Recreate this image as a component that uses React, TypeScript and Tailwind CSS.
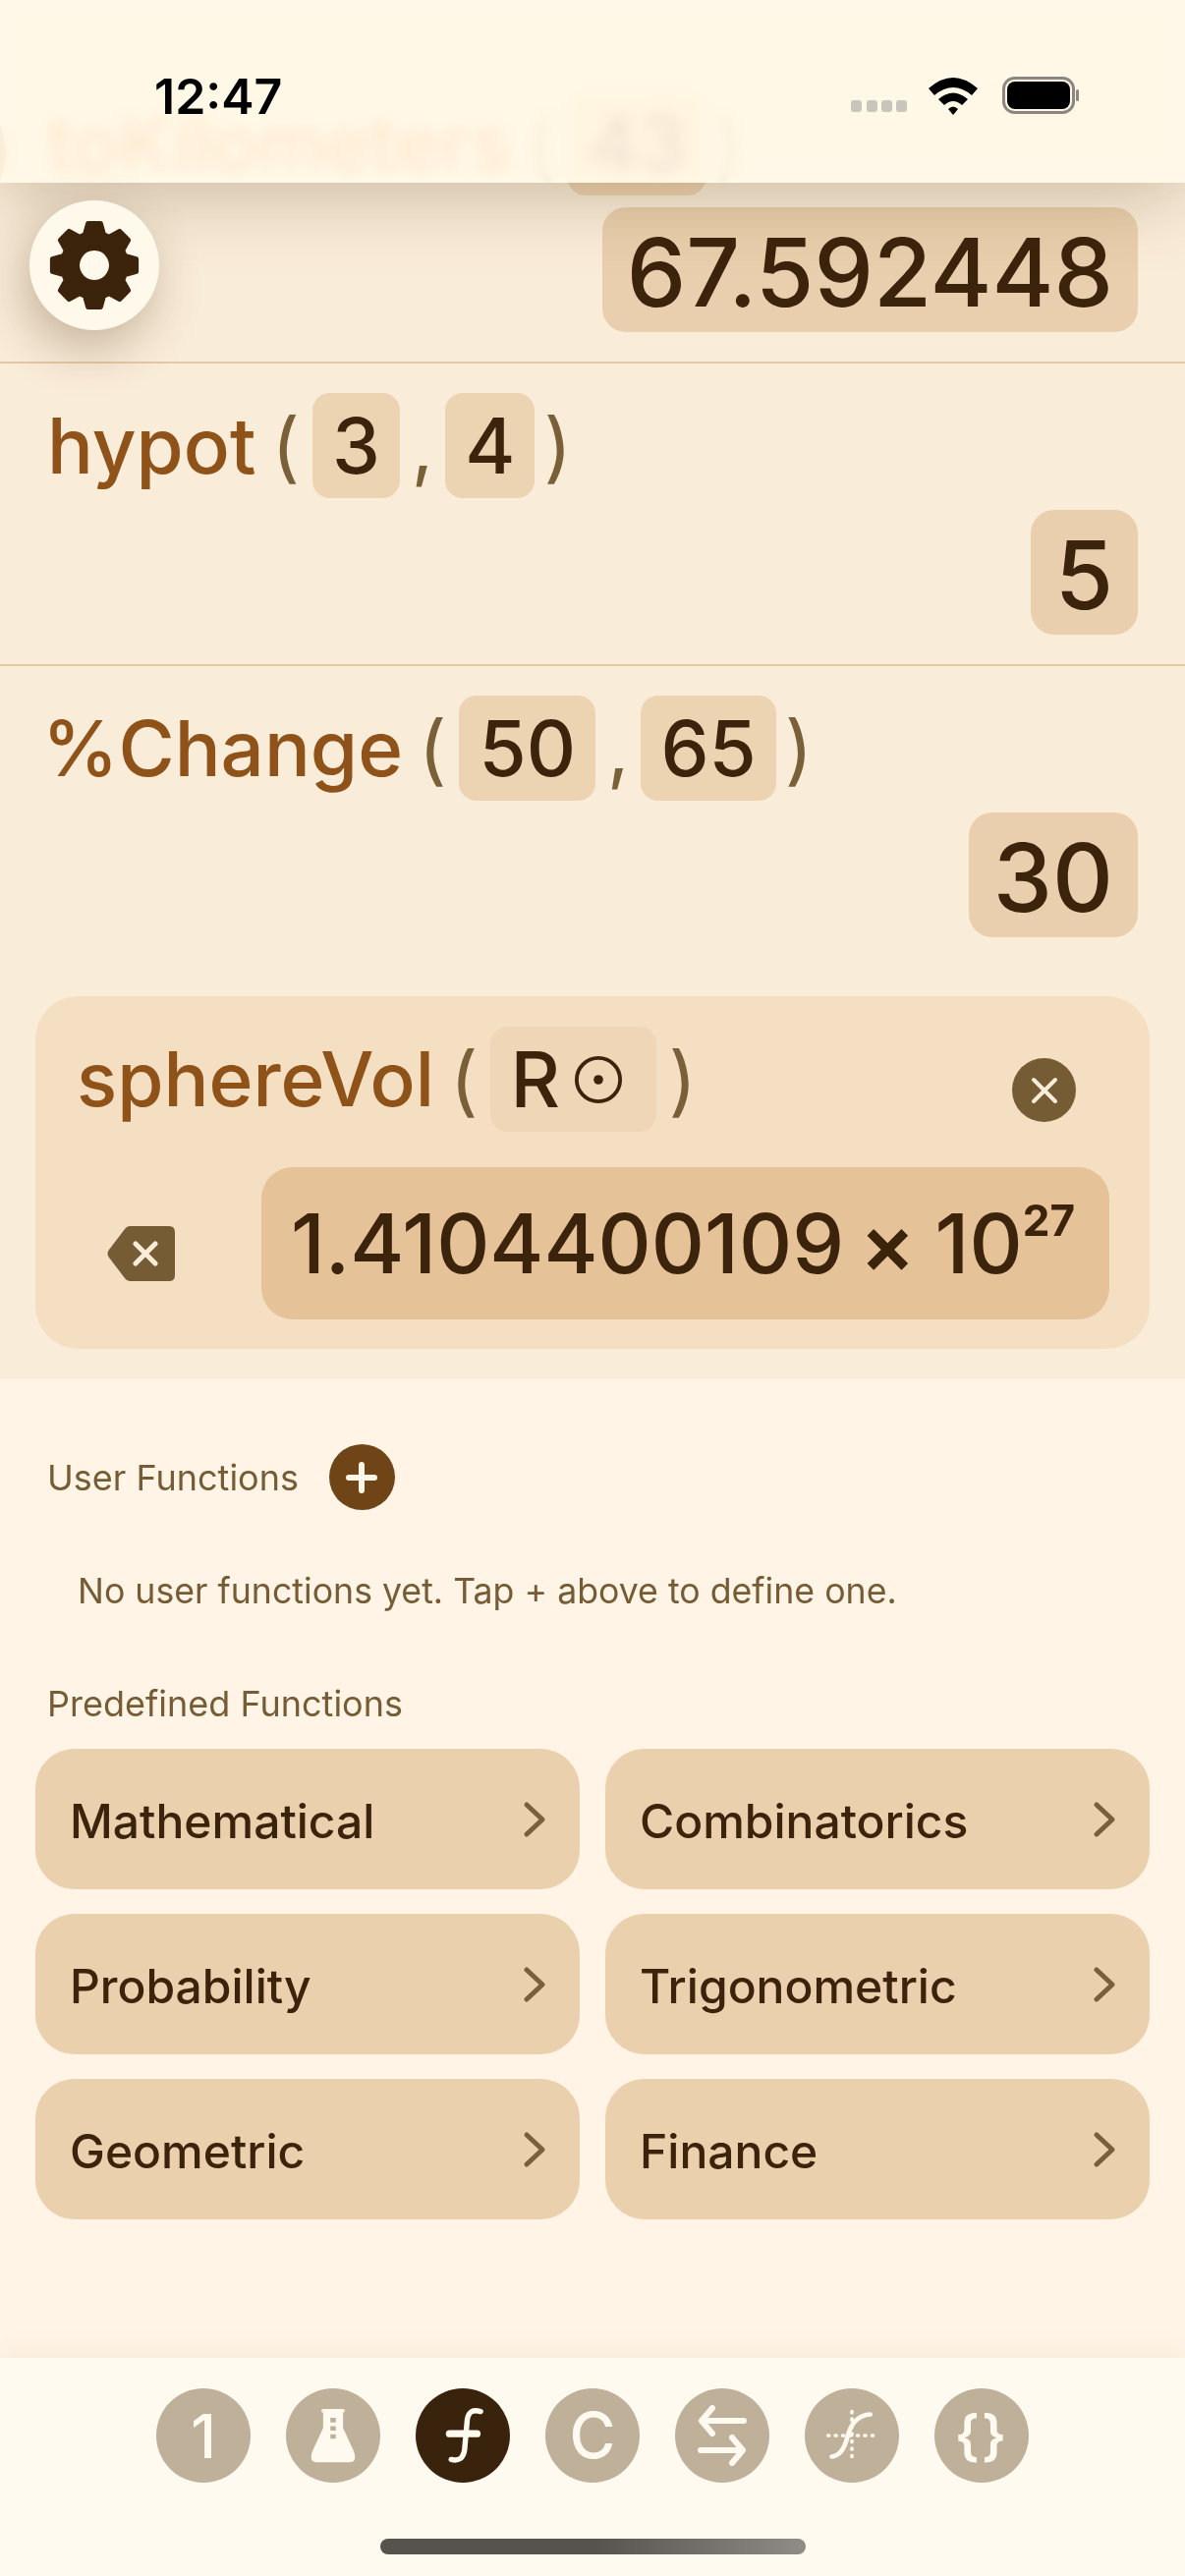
import type { ReactNode } from "react";

const gearPath = () => {
  const cx = 50;
  const cy = 50;
  const teeth = 8;
  let d = "";
  for (let i = 0; i < teeth; i++) {
    const a = (i * Math.PI * 2) / teeth - Math.PI / 2;
    const pts: [number, number][] = [
      [34, -0.3],
      [45, -0.15],
      [45, 0.15],
      [34, 0.3],
    ];
    pts.forEach(([r, o], j) => {
      const x = cx + r * Math.cos(a + o);
      const y = cy + r * Math.sin(a + o);
      d += `${i === 0 && j === 0 ? "M" : "L"}${x.toFixed(2)} ${y.toFixed(2)} `;
    });
  }
  return `${d}Z M50 32 a18 18 0 1 0 0.01 0 Z`;
};

function Chip({ children, className = "" }: { children: ReactNode; className?: string }) {
  return (
    <span className={`flex h-[107px] items-center justify-center rounded-[18px] bg-[#ecd3b1] text-[#3c230c] ${className}`}>
      {children}
    </span>
  );
}

function ResultChip({ children }: { children: ReactNode }) {
  return (
    <div className="mt-[12px] flex justify-end pr-[48px]">
      <span className="flex h-[127px] items-center rounded-[24px] bg-[#e9cfad] px-[25px] text-[96px] font-medium text-[#3c230c]">
        <span className="translate-y-[2px]">{children}</span>
      </span>
    </div>
  );
}

function Expr({ name, args, className = "pl-[48px]" }: { name: string; args: string[]; className?: string }) {
  return (
    <div className={`flex h-[107px] items-center text-[78px] font-medium ${className}`}>
      <span className="text-[#8f5219]">{name}</span>
      <span className="ml-[16px] mr-[13px] font-normal text-[#7a6038]">(</span>
      {args.map((a, i) => (
        <span key={i} className="flex items-center">
          {i > 0 && <span className="mx-[12px] font-normal text-[#7a6038]">,</span>}
          <Chip className="px-[20px]">{a}</Chip>
        </span>
      ))}
      <span className="ml-[9px] font-normal text-[#7a6038]">)</span>
    </div>
  );
}

function CategoryButton({ label }: { label: string }) {
  return (
    <div className="flex h-[143px] items-center justify-between rounded-[40px] bg-[#ebd0ad] pl-[35px] pr-[34px] text-[48px] font-medium text-[#3c230c]">
      <span className="translate-y-[2px]">{label}</span>
      <svg width="24" height="38" viewBox="0 0 24 38" fill="none" stroke="#7a6038" strokeWidth="5" strokeLinecap="round" strokeLinejoin="round">
        <path d="M4 4 L20 19 L4 34" />
      </svg>
    </div>
  );
}

function NavButton({ children, active = false }: { children: ReactNode; active?: boolean }) {
  return (
    <div
      className={`flex h-[96px] w-[96px] items-center justify-center rounded-full text-[#fffaf0] ${
        active ? "bg-[#3a230d]" : "bg-[#bfb09a]"
      }`}
    >
      {children}
    </div>
  );
}

export default function App() {
  return (
    <div className="relative flex h-[2622px] w-[1206px] flex-col overflow-hidden bg-[#fff4e6] font-['Inter',sans-serif]">
      {/* status bar over the scrolled history */}
      <div className="absolute left-0 top-0 z-10 h-[186px] w-full bg-[#fff9ec]/90 shadow-[0_10px_80px_rgba(90,60,20,0.3)] backdrop-blur-[8px] backdrop-saturate-[2.5]">
        <span className="absolute left-[157px] top-[68px] text-[50px] font-semibold leading-[60px] text-black">12:47</span>
        <div className="absolute left-[866px] top-[78px] flex items-center">
          <svg width="235" height="40" viewBox="0 0 235 40">
            <rect x="0" y="24" width="11" height="12" rx="3" fill="#c9c5bd" />
            <rect x="16" y="24" width="11" height="12" rx="3" fill="#c9c5bd" />
            <rect x="31" y="24" width="11" height="12" rx="3" fill="#c9c5bd" />
            <rect x="46" y="24" width="11" height="12" rx="3" fill="#c9c5bd" />
            <path d="M79 12 Q104 -10 129 12 L123 19 Q104 3 85 19 Z" fill="#000" />
            <path d="M89 23 Q104 10 119 23 L113 29 Q104 21 95 29 Z" fill="#000" />
            <path d="M99 33 Q104 28 109 33 L104 39 Z" fill="#000" />
            <rect x="155.5" y="1.5" width="71" height="35" rx="11" fill="none" stroke="#8b8780" strokeWidth="3" />
            <rect x="159" y="5" width="64" height="28" rx="8" fill="#000" />
            <rect x="229" y="13" width="3" height="12" rx="1.5" fill="#8b8780" />
          </svg>
        </div>
      </div>

      {/* history */}
      <div className="flex h-[1404px] shrink-0 flex-col bg-[#f9ecd9] pt-[92px]">
        <div className="relative h-[278px] border-b-2 border-[#e3c9a5]">
          <span className="absolute left-[-14px] top-[0px] text-[78px] text-[#8f5219]">)</span>
          <Expr name="toKilometers" args={["43"]} />
          <ResultChip>67.592448</ResultChip>
        </div>
        <div className="h-[308px] border-b-2 border-[#e3c9a5] pt-[30px]">
          <Expr name="hypot" args={["3", "4"]} />
          <ResultChip>5</ResultChip>
        </div>
        <div className="pt-[30px]">
          <Expr name="%Change" args={["50", "65"]} className="pl-[43px]" />
          <ResultChip>30</ResultChip>
        </div>

        <div className="mx-[36px] mt-[60px] h-[359px] rounded-[44px] bg-[#f5dfc2] pt-[31px]">
          <div className="flex h-[107px] items-center pl-[42px] pr-[75px] text-[78px] font-medium">
            <span className="text-[76.5px] text-[#8f5219]">sphereVol</span>
            <span className="ml-[16px] mr-[13px] font-normal text-[#7a6038]">(</span>
            <Chip className="w-[169px] justify-start gap-[14px] bg-[#eed6b6] pl-[20px]">
              R
              <svg width="50" height="50" viewBox="0 0 52 52">
                <circle cx="26" cy="26" r="23" fill="none" stroke="#3c230c" strokeWidth="4" />
                <circle cx="26" cy="26" r="5" fill="#3c230c" />
              </svg>
            </Chip>
            <span className="ml-[12px] font-normal text-[#7a6038]">)</span>
            <div className="ml-auto mt-[22px] flex h-[65px] w-[65px] items-center justify-center rounded-full bg-[#755c35]">
              <svg width="32" height="32" viewBox="0 0 32 32" stroke="#f9ecd9" strokeWidth="4" strokeLinecap="round">
                <path d="M5 5 L27 27 M27 5 L5 27" />
              </svg>
            </div>
          </div>
          <div className="mt-[36px] flex items-center pl-[72px] pr-[41px]">
            <svg width="72" height="60" viewBox="0 0 72 60" className="mt-[20px]">
              <path d="M24 2 H64 Q70 2 70 8 V52 Q70 58 64 58 H24 Q21 58 19 55 L3 34 Q0 30 3 26 L19 5 Q21 2 24 2 Z" fill="#755c35" />
              <path d="M30 20 L50 40 M50 20 L30 40" stroke="#f9ecd9" strokeWidth="5" strokeLinecap="round" />
            </svg>
            <div className="ml-auto flex h-[155px] w-[863px] items-center rounded-[32px] bg-[#e5c298] pl-[30px] text-[84px] font-medium text-[#3c230c]">
              1.4104400109
              <span className="ml-[16px] mr-[20px] font-semibold">×</span>
              10
              <sup className="top-[-24px] text-[44px] font-bold">27</sup>
            </div>
          </div>
        </div>
      </div>

      {/* functions list */}
      <div className="flex-1 px-[36px]">
        <div className="mt-[66px] flex h-[67px] items-center pl-[12px]">
          <span className="text-[36px] text-[#755c35]">User Functions</span>
          <div className="ml-[31px] flex h-[67px] w-[67px] items-center justify-center rounded-full bg-[#6f4518]">
            <svg width="36" height="36" viewBox="0 0 36 36" stroke="#fff4e6" strokeWidth="6" strokeLinecap="round">
              <path d="M18 5 V31 M5 18 H31" />
            </svg>
          </div>
        </div>
        <div className="mt-[60px] pl-[43px] text-[35.7px] leading-[44px] text-[#755c35]">
          No user functions yet. Tap + above to define one.
        </div>
        <div className="mt-[71px] pl-[12px] text-[36px] leading-[44px] text-[#755c35]">Predefined Functions</div>
        <div className="mt-[24px] grid grid-cols-2 gap-x-[26px] gap-y-[25px]">
          <CategoryButton label="Mathematical" />
          <CategoryButton label="Combinatorics" />
          <CategoryButton label="Probability" />
          <CategoryButton label="Trigonometric" />
          <CategoryButton label="Geometric" />
          <CategoryButton label="Finance" />
        </div>
      </div>

      {/* tab bar */}
      <div className="flex h-[222px] shrink-0 flex-col items-center bg-[#fffaf0] shadow-[0_-8px_24px_rgba(120,80,30,0.05)]">
        <div className="mt-[31px] flex gap-[36px]">
          <NavButton>
            <span className="text-[62px] font-medium">1</span>
          </NavButton>
          <NavButton>
            <svg width="52" height="57" viewBox="0 0 56 62">
              <path
                fillRule="evenodd"
                d="M17 1 H39 Q41 1 41 3 Q41 5 39 5 V22 L51 48 Q55 60 46 60 H10 Q1 60 5 48 L17 22 V5 Q15 5 15 3 Q15 1 17 1 Z M25 11 h6 v5 h-6 Z M25 20 h6 v5 h-6 Z M25 29 h6 v5 h-6 Z"
                fill="#fffaf0"
              />
            </svg>
          </NavButton>
          <NavButton active>
            <svg width="44" height="58" viewBox="0 0 48 64" fill="none" stroke="#fffaf0" strokeLinecap="round">
              <path d="M44 5 Q31 1 29 14 L26 48 Q24 62 11 59" strokeWidth="6" />
              <path d="M9 30 H40" strokeWidth="8" />
            </svg>
          </NavButton>
          <NavButton>
            <span className="text-[64px] font-medium">C</span>
          </NavButton>
          <NavButton>
            <svg width="50" height="62" viewBox="0 0 50 62" fill="none" stroke="#fffaf0" strokeWidth="6" strokeLinecap="round" strokeLinejoin="round">
              <path d="M47 16 H5 M15 3 L4 16 L15 29" />
              <path d="M3 46 H45 M35 33 L46 46 L35 59" />
            </svg>
          </NavButton>
          <NavButton>
            <svg width="56" height="56" viewBox="0 0 60 60" fill="none" stroke="#fffaf0" strokeLinecap="round">
              <path d="M4 30 H56" strokeWidth="4" strokeDasharray="1 7" />
              <path d="M30 4 V56" strokeWidth="4" strokeDasharray="1 7" />
              <path d="M8 53 Q20 52 25 32 Q31 8 50 7" strokeWidth="5" />
            </svg>
          </NavButton>
          <NavButton>
            <span className="text-[56px] font-semibold leading-none tracking-[2px]">{"{}"}</span>
          </NavButton>
        </div>
        <div className="mt-[57px] h-[16px] w-[433px] rounded-full bg-gradient-to-r from-[#55534c] via-[#55534c] to-[#8f8d85]" />
      </div>

      {/* floating settings button */}
      <div className="absolute left-[30px] top-[204px] z-20 flex h-[132px] w-[132px] items-center justify-center rounded-full bg-[#fff9ec] shadow-[-6px_18px_50px_rgba(90,60,20,0.32)]">
        <svg width="96" height="96" viewBox="0 0 100 100">
          <path d={gearPath()} fill="#3c230c" fillRule="evenodd" stroke="#3c230c" strokeWidth="5" strokeLinejoin="round" />
        </svg>
      </div>
    </div>
  );
}
